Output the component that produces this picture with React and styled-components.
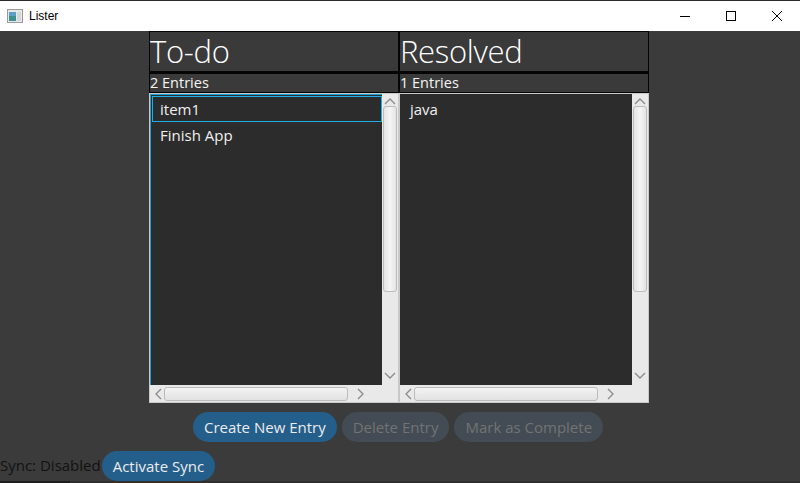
import styled, { createGlobalStyle, css } from "styled-components";

const GlobalStyle = createGlobalStyle`
  html, body {
    margin: 0;
    padding: 0;
    width: 800px;
    height: 483px;
    overflow: hidden;
    background: #3b3b3b;
  }
  * {
    box-sizing: border-box;
  }
`;

const Window = styled.div`
  width: 800px;
  height: 483px;
  display: flex;
  flex-direction: column;
  font-family: "Open Sans", "Noto Sans", sans-serif;
  background: #3b3b3b;
`;

const TitleBar = styled.div`
  height: 31px;
  flex: none;
  background: #fff;
  border-top: 1px solid #2a2a2a;
  display: flex;
  align-items: center;
  padding-left: 7px;
`;

const TitleText = styled.span`
  font-family: "Liberation Sans", Arial, sans-serif;
  font-size: 12px;
  color: #000;
  margin-left: 6px;
`;

const Controls = styled.div`
  margin-left: auto;
  display: flex;
  height: 100%;
`;

const ControlBtn = styled.div`
  width: 46px;
  height: 100%;
  display: flex;
  align-items: center;
  justify-content: center;
`;

const Body = styled.div`
  flex: 1;
  display: flex;
  flex-direction: column;
  align-items: center;
`;

const Columns = styled.div`
  display: grid;
  grid-template-columns: 250px 250px;
  margin-left: -2px;
`;

const Column = styled.div`
  display: flex;
  flex-direction: column;
`;

const HeaderBox = styled.div`
  height: 41px;
  border: 1px solid #050505;
  background: #3a3a3a;
  color: #fff;
  font-size: 31px;
  font-weight: 300;
  line-height: 38px;
  letter-spacing: -0.3px;
`;

const CountBox = styled.div`
  height: 21px;
  border: 1px solid #050505;
  border-top-width: 2px;
  background: #3a3a3a;
  color: #f4f4f4;
  font-size: 14.5px;
  line-height: 17px;
`;

const ListView = styled.div`
  height: 310px;
  border: 1px solid #c9c9c9;
  background: #2c2c2c;
  display: grid;
  grid-template-columns: 1fr 16px;
  grid-template-rows: 1fr 17px;
  ${(p) =>
    p.$focused &&
    css`
      box-shadow: inset 1px 0 0 #17a3d8, inset 0 1px 0 #17a3d8;
    `}
`;

const Items = styled.div`
  padding: 2px 0 0 2px;
  display: flex;
  flex-direction: column;
`;

const Item = styled.div`
  height: 26px;
  display: flex;
  align-items: center;
  padding-left: 7px;
  font-size: 15px;
  color: #f0f0f0;
  border: 1px solid transparent;
  ${(p) =>
    p.$selected &&
    css`
      border-color: #1eaee8;
    `}
`;

const VTrack = styled.div`
  background: #e9e9e9;
  display: flex;
  flex-direction: column;
  align-items: center;
  padding-top: 3px;
`;

const HTrack = styled.div`
  background: #e9e9e9;
  display: flex;
  align-items: center;
  padding: 0 4px;
`;

const Corner = styled.div`
  background: #e9e9e9;
`;

const VThumb = styled.div`
  width: 14px;
  height: 186px;
  margin-top: 1px;
  border: 1px solid #bcbcbc;
  border-radius: 3px;
  background: linear-gradient(to right, #e4e4e4, #f5f5f5 50%, #e4e4e4);
`;

const HThumb = styled.div`
  width: 184px;
  height: 14px;
  margin-left: 2px;
  border: 1px solid #bcbcbc;
  border-radius: 3px;
  background: linear-gradient(to bottom, #f3f3f3, #e2e2e2);
`;

const Arrow = styled.svg`
  flex: none;
  ${(p) =>
    p.$push &&
    css`
      margin-top: auto;
      margin-bottom: 5px;
    `}
  ${(p) =>
    p.$right &&
    css`
      margin-left: auto;
      margin-right: 13px;
    `}
`;

const ButtonRow = styled.div`
  display: flex;
  gap: 5px;
  margin-top: 9px;
  margin-left: -4px;
`;

const Pill = styled.div`
  height: 30px;
  padding: 0 11px;
  border-radius: 15px;
  display: flex;
  align-items: center;
  font-size: 15px;
  background: ${(p) => (p.$disabled ? "#434c54" : "#245f8b")};
  color: ${(p) => (p.$disabled ? "#737373" : "#ececec")};
`;

const SyncRow = styled.div`
  align-self: stretch;
  display: flex;
  align-items: center;
  margin-top: 9px;
`;

const SyncLabel = styled.span`
  font-size: 15px;
  color: #121212;
  margin-top: -2px;
  margin-right: 1px;
`;

const Strip = styled.div`
  height: 3px;
  flex: none;
  background: linear-gradient(to right, #1c1c1c 0 70px, #303030 70px);
`;

const Up = () => (
  <Arrow width="12" height="8" viewBox="0 0 12 8">
    <polyline points="1,7 6,2 11,7" fill="none" stroke="#8a8a8a" strokeWidth="1.3" />
  </Arrow>
);

const Down = () => (
  <Arrow $push width="12" height="8" viewBox="0 0 12 8">
    <polyline points="1,1 6,6 11,1" fill="none" stroke="#8a8a8a" strokeWidth="1.3" />
  </Arrow>
);

const Left = () => (
  <Arrow width="8" height="12" viewBox="0 0 8 12">
    <polyline points="7,1 2,6 7,11" fill="none" stroke="#8a8a8a" strokeWidth="1.3" />
  </Arrow>
);

const Right = () => (
  <Arrow $right width="8" height="12" viewBox="0 0 8 12">
    <polyline points="1,1 6,6 1,11" fill="none" stroke="#8a8a8a" strokeWidth="1.3" />
  </Arrow>
);

const List = ({ items, focused, selected }) => (
  <ListView $focused={focused}>
    <Items>
      {items.map((it, i) => (
        <Item key={it} $selected={i === selected}>
          {it}
        </Item>
      ))}
    </Items>
    <VTrack>
      <Up />
      <VThumb />
      <Down />
    </VTrack>
    <HTrack>
      <Left />
      <HThumb />
      <Right />
    </HTrack>
    <Corner />
  </ListView>
);

const App = () => {
  const todo = ["item1", "Finish App"];
  const resolved = ["java"];

  return (
    <Window>
      <GlobalStyle />
      <TitleBar>
        <svg width="16" height="14" viewBox="0 0 16 14">
          <rect x="0.5" y="0.5" width="15" height="13" fill="#e8e8e8" stroke="#9a9a9a" />
          <rect x="2" y="3" width="7" height="9" fill="#3f8f8f" />
          <rect x="2" y="3" width="7" height="4" fill="#5aa0c8" />
          <rect x="10" y="3" width="4" height="9" fill="#d8d8d8" />
        </svg>
        <TitleText>Lister</TitleText>
        <Controls>
          <ControlBtn>
            <svg width="12" height="12" viewBox="0 0 12 12">
              <line x1="1" y1="6.5" x2="11" y2="6.5" stroke="#000" strokeWidth="1" />
            </svg>
          </ControlBtn>
          <ControlBtn>
            <svg width="12" height="12" viewBox="0 0 12 12">
              <rect x="1.5" y="1.5" width="9" height="9" fill="none" stroke="#000" strokeWidth="1" />
            </svg>
          </ControlBtn>
          <ControlBtn>
            <svg width="12" height="12" viewBox="0 0 12 12">
              <line x1="1" y1="1" x2="11" y2="11" stroke="#000" strokeWidth="1" />
              <line x1="11" y1="1" x2="1" y2="11" stroke="#000" strokeWidth="1" />
            </svg>
          </ControlBtn>
        </Controls>
      </TitleBar>
      <Body>
        <Columns>
          <Column>
            <HeaderBox>To-do</HeaderBox>
            <CountBox>{todo.length} Entries</CountBox>
            <List items={todo} focused selected={0} />
          </Column>
          <Column>
            <HeaderBox>Resolved</HeaderBox>
            <CountBox>{resolved.length} Entries</CountBox>
            <List items={resolved} />
          </Column>
        </Columns>
        <ButtonRow>
          <Pill>Create New Entry</Pill>
          <Pill $disabled>Delete Entry</Pill>
          <Pill $disabled>Mark as Complete</Pill>
        </ButtonRow>
        <SyncRow>
          <SyncLabel>Sync: Disabled</SyncLabel>
          <Pill>Activate Sync</Pill>
        </SyncRow>
      </Body>
      <Strip />
    </Window>
  );
};

export default App;
